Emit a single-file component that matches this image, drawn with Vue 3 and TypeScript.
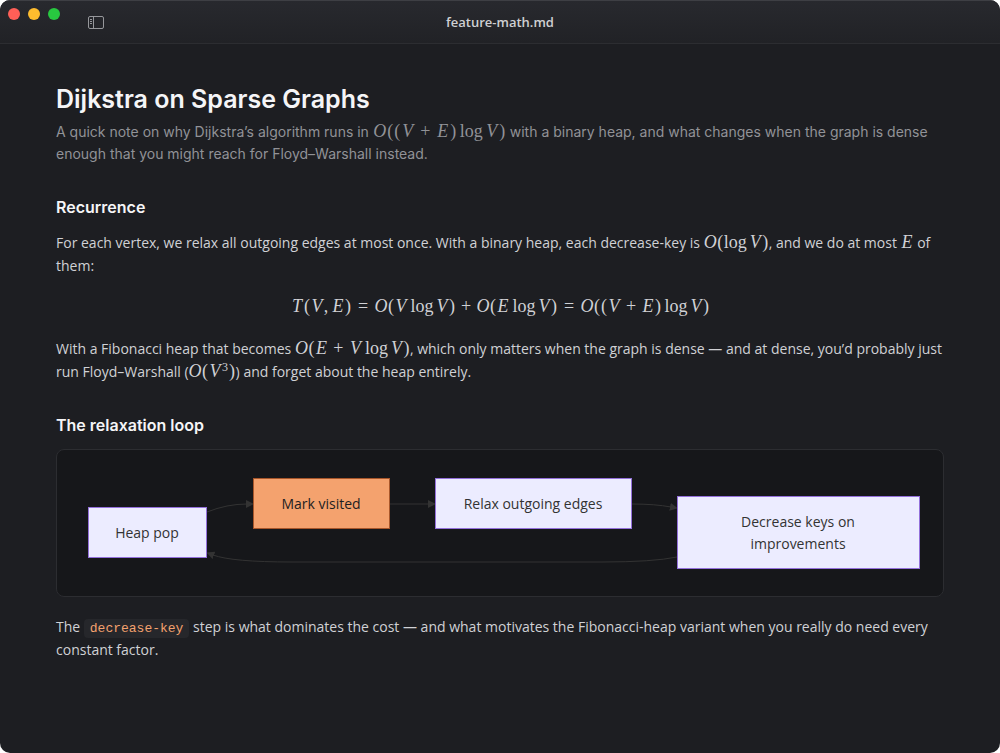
<script setup lang="ts">
import { h, type FunctionalComponent } from 'vue'

const atomClass: Record<string, string> = {
  O: 'cap', V: 'cap', E: 'cap', T: 'cap',
  '(': 'open', ')': 'close', '+': 'plus', '=': 'rel', ',': 'comma', log: 'fn', '3': 'sup',
}

const Formula: FunctionalComponent<{ tex: string }> = (props) =>
  h('span', { class: 'math' }, props.tex.split(' ').map((atom) => {
    const cls = ['atom', atomClass[atom]]
    return h(atom === '3' ? 'sup' : 'span', { class: cls }, atom)
  }))
Formula.props = ['tex']

interface GraphNode {
  x: number
  y: number
  w: number
  h: number
  lines: string[]
  active?: boolean
}

const nodes: GraphNode[] = [
  { x: 31, y: 57, w: 118, h: 50, lines: ['Heap pop'] },
  { x: 196, y: 28, w: 136, h: 50, lines: ['Mark visited'], active: true },
  { x: 378, y: 28, w: 196, h: 50, lines: ['Relax outgoing edges'] },
  { x: 620, y: 46, w: 242, h: 72, lines: ['Decrease keys on', 'improvements'] },
]

const edges: string[] = [
  'M150 62 Q170 54 190 54',
  'M333 54 H372',
  'M575 54 Q598 54 614 57',
  'M620 107 Q596 112 545 112 H235 Q175 112 156 105',
]

const lineY = (n: GraphNode, i: number) => n.y + n.h / 2 + 6 + (i - (n.lines.length - 1) / 2) * 22
</script>

<template>
  <div class="window">
    <header class="titlebar">
      <div class="lights">
        <button class="light red" aria-label="Close"></button>
        <button class="light amber" aria-label="Minimize"></button>
        <button class="light green" aria-label="Zoom"></button>
      </div>
      <button class="sidebar-toggle" aria-label="Toggle sidebar">
        <svg width="16" height="13" viewBox="0 0 16 13" fill="none" stroke="currentColor">
          <rect x="0.5" y="0.5" width="15" height="12" rx="1.5" />
          <path d="M5.5 0.5V12.5M2 3.5H4M2 5.5H4M2 7.5H4" />
        </svg>
      </button>
      <div class="title">feature-math.md</div>
    </header>

    <main class="document">
      <h1>Dijkstra on Sparse Graphs</h1>
      <p class="lede">
        A quick note on why Dijkstra’s algorithm runs in <Formula tex="O ( ( V + E ) log V )" /> with a binary heap, and
        what changes when the graph is dense enough that you might reach for Floyd–Warshall instead.
      </p>

      <h2>Recurrence</h2>
      <p>
        For each vertex, we relax all outgoing edges at most once. With a binary heap, each decrease-key is
        <span class="nobreak"><Formula tex="O ( log V )" />,</span> and we do at most <Formula tex="E" /> of them:
      </p>
      <div class="display">
        <Formula tex="T ( V , E ) = O ( V log V ) + O ( E log V ) = O ( ( V + E ) log V )" />
      </div>
      <p>
        With a Fibonacci heap that becomes <span class="nobreak"><Formula tex="O ( E + V log V )" />,</span> which only
        matters when the graph is dense — and at dense, you’d probably just run Floyd–Warshall
        <span class="nobreak">(<Formula tex="O ( V 3 )" />)</span> and forget about the heap entirely.
      </p>

      <h2>The relaxation loop</h2>
      <figure class="diagram">
        <svg viewBox="0 0 886 146" role="img" aria-label="Relaxation loop">
          <defs>
            <marker id="arrow" viewBox="0 0 8 8" refX="1" refY="4" markerWidth="8" markerHeight="8" markerUnits="userSpaceOnUse" orient="auto">
              <path d="M0 0L8 4L0 8Z" class="arrowhead" />
            </marker>
          </defs>
          <path v-for="d in edges" :key="d" :d="d" class="edge" marker-end="url(#arrow)" />
          <g v-for="n in nodes" :key="n.lines[0]" :class="['node', { active: n.active }]">
            <rect :x="n.x + 0.5" :y="n.y + 0.5" :width="n.w" :height="n.h" />
            <text v-for="(line, i) in n.lines" :key="line" :x="n.x + n.w / 2" :y="lineY(n, i)">{{ line }}</text>
          </g>
        </svg>
      </figure>
      <p>
        The <code>decrease-key</code> step is what dominates the cost — and what motivates the Fibonacci-heap variant
        when you really do need every constant factor.
      </p>
    </main>
  </div>
</template>

<style>
html {
  background: #fff;
}
body {
  margin: 0;
}
</style>

<style scoped>
.window {
  box-sizing: border-box;
  min-height: 100vh;
  border-radius: 10px;
  overflow: hidden;
  background: #1d1e22;
  color: #d0d1d5;
  font-family: "Open Sans", "Noto Sans", sans-serif;
  font-size: 14px;
  line-height: 23px;
}
.titlebar {
  box-sizing: border-box;
  height: 44px;
  display: grid;
  grid-template-columns: 88px 1fr 88px;
  align-items: center;
  background: linear-gradient(#28292e, #212226);
  border-top: 1px solid #3e3f44;
  border-bottom: 1px solid #2c2d31;
}
.lights {
  align-self: start;
  display: flex;
  gap: 8px;
  padding: 7px 8px;
}
button {
  border: 0;
  padding: 0;
  background: none;
}
.light {
  width: 12px;
  height: 12px;
  border-radius: 50%;
}
.red { background: #ff5f57; }
.amber { background: #febc2e; }
.green { background: #28c840; }
.sidebar-toggle {
  grid-column: 2;
  grid-row: 1;
  justify-self: start;
  display: flex;
  color: #96979b;
}
.title {
  grid-column: 2;
  grid-row: 1;
  justify-self: center;
  font-size: 13px;
  font-weight: 600;
  line-height: 20px;
  color: #cfd0d3;
}
.document {
  padding: 38px 56px 56px;
}
h1 {
  margin: 0 0 5px;
  font-family: Inter, sans-serif;
  font-size: 25px;
  font-weight: 600;
  line-height: 34px;
  color: #f5f5f7;
}
h2 {
  margin: 30px 0 12px;
  font-family: Inter, sans-serif;
  font-size: 16px;
  font-weight: 600;
  line-height: 24px;
  color: #f5f5f7;
}
p {
  margin: 0;
}
.lede {
  font-family: Inter, sans-serif;
  line-height: 22px;
  color: #919297;
}
.nobreak {
  white-space: nowrap;
}
.display {
  margin: 16px 0;
  line-height: 28px;
  text-align: center;
}
.math {
  white-space: nowrap;
  font-family: "Liberation Serif", serif;
  font-size: 18px;
  line-height: 18px;
}
:deep(.atom) {
  display: inline-block;
  text-align: center;
  line-height: 18px;
}
:deep(.cap) {
  width: 13px;
  font-style: italic;
}
:deep(.open), :deep(.close) { width: 7px; }
:deep(.plus) { width: 13px; margin: 0 4px; }
:deep(.rel) { width: 13px; margin: 0 5px; }
:deep(.comma) { width: 5px; margin-right: 3px; }
:deep(.fn) { width: 22px; margin: 0 3px; }
:deep(.open + .fn) { margin-left: 0; }
:deep(.sup) { width: 7px; font-size: 12px; line-height: 12px; vertical-align: 6px; }
.lede :deep(.cap) { width: 14px; }
.diagram {
  margin: 0 0 18px;
  border: 1px solid #2c2d31;
  border-radius: 8px;
  background: #16171a;
}
.diagram svg {
  display: block;
  width: 100%;
}
.edge {
  fill: none;
  stroke: #333;
}
.arrowhead {
  fill: #333;
}
.node rect {
  fill: #ececff;
  stroke: #9370db;
}
.node text {
  fill: #333;
  text-anchor: middle;
}
.node.active rect {
  fill: #f4a26e;
  stroke: #a8562a;
}
.node.active text {
  fill: #1d1e22;
}
code {
  padding: 2px 6px;
  border-radius: 4px;
  background: #26272b;
  color: #f4a26e;
  font-family: "Liberation Mono", monospace;
  font-size: 13px;
  line-height: 16px;
}
</style>
